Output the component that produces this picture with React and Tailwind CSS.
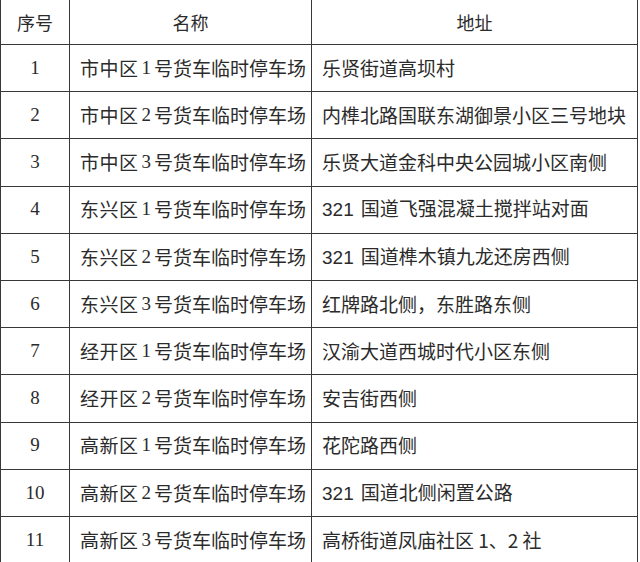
import React from "react";

const rows = [
  ["1", "市中区", "1", "乐贤街道高坝村"],
  ["2", "市中区", "2", "内榫北路国联东湖御景小区三号地块"],
  ["3", "市中区", "3", "乐贤大道金科中央公园城小区南侧"],
  ["4", "东兴区", "1", "321 国道飞强混凝土搅拌站对面"],
  ["5", "东兴区", "2", "321 国道榫木镇九龙还房西侧"],
  ["6", "东兴区", "3", "红牌路北侧，东胜路东侧"],
  ["7", "经开区", "1", "汉渝大道西城时代小区东侧"],
  ["8", "经开区", "2", "安吉街西侧"],
  ["9", "高新区", "1", "花陀路西侧"],
  ["10", "高新区", "2", "321 国道北侧闲置公路"],
  ["11", "高新区", "3", "高桥街道凤庙社区 1、2 社"],
];

const cjk = { fontFamily: '"Noto Sans CJK SC", "Noto Sans", sans-serif' };
const serif = { fontFamily: '"Liberation Serif", "Noto Sans CJK SC", serif' };

function Addr({ text }) {
  const m = text.match(/^(321) (.*)$/);
  if (m) {
    return (
      <span>
        <span style={{ fontFamily: '"Liberation Sans", sans-serif' }}>321</span>
        <span className="inline-block w-[7px]"></span>
        {m[2]}
      </span>
    );
  }
  return <span>{text}</span>;
}

export default function App() {
  return (
    <div className="w-[640px] h-[562px] overflow-hidden bg-white text-[#2b2b2b]" style={cjk}>
      <div className="w-[638px] border-l border-r border-[#383838]">
        <div className="flex h-[45px] border-b border-[#383838] text-[18px]">
          <div className="w-[69px] border-r border-[#383838] flex items-center justify-center">序号</div>
          <div className="w-[242px] border-r border-[#383838] flex items-center justify-center">名称</div>
          <div className="flex-1 flex items-center justify-center">地址</div>
        </div>
        {rows.map(([n, area, k, addr]) => (
          <div key={n} className="flex h-[47.2px] border-b border-[#383838] text-[19px]">
            <div className="w-[69px] border-r border-[#383838] flex items-center justify-center" style={serif}>
              {n}
            </div>
            <div className="w-[242px] border-r border-[#383838] flex items-center pl-[10px] whitespace-nowrap">
              <span className="tracking-[0.5px]">{area}</span>
              <span className="px-[3px]" style={serif}>{k}</span>
              <span>号货车临时停车场</span>
            </div>
            <div className="flex-1 flex items-center pl-[10px] whitespace-nowrap">
              <Addr text={addr} />
            </div>
          </div>
        ))}
      </div>
    </div>
  );
}
